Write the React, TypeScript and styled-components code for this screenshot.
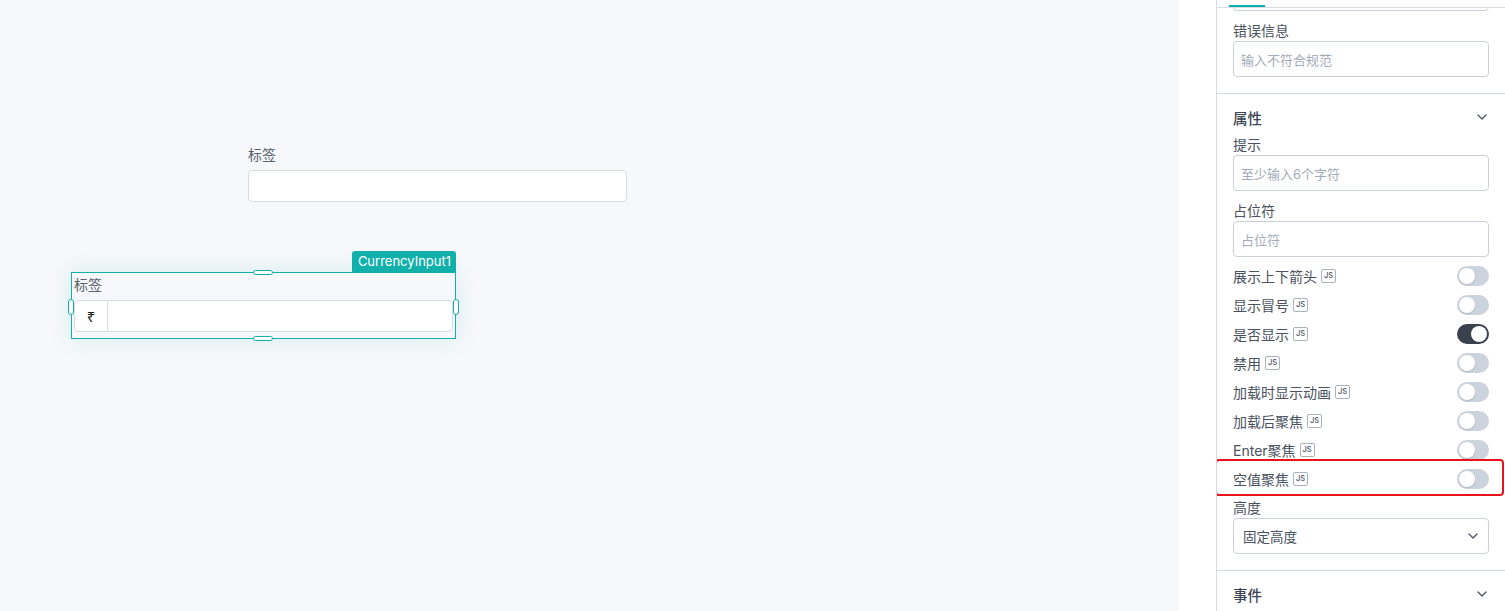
import React from "react";
import styled, { createGlobalStyle, css } from "styled-components";

const GlobalStyle = createGlobalStyle`
  html, body {
    margin: 0;
    padding: 0;
    height: 100%;
  }
  body {
    font-family: Inter, "Noto Sans CJK SC", sans-serif;
    background: #fff;
    overflow: hidden;
  }
  #root {
    height: 100%;
  }
`;

const toggles = [
    { label: "展示上下箭头", on: false },
    { label: "显示冒号", on: false },
    { label: "是否显示", on: true },
    { label: "禁用", on: false },
    { label: "加载时显示动画", on: false },
    { label: "加载后聚焦", on: false },
    { label: "Enter聚焦", on: false },
    { label: "空值聚焦", on: false, highlight: true },
];

const Chevron = ({ size = 10 }: { size?: number }) => (
    <svg width={size} height={size * 0.6} viewBox="0 0 10 6" fill="none">
        <polyline points="1,1 5,5 9,1" stroke="#4b5263" strokeWidth="1.3" strokeLinecap="round" strokeLinejoin="round" />
    </svg>
);

export default function App() {
    return (
        <>
            <GlobalStyle />
            <Layout>
                <Canvas>
                    <Widget $x={248} $y={146} $w={379}>
                        <WidgetLabel>标签</WidgetLabel>
                        <TextBox />
                    </Widget>

                    <Selected $x={71} $y={272} $w={385}>
                        <NameTag>CurrencyInput1</NameTag>
                        <Handle $side="top" />
                        <Handle $side="bottom" />
                        <Handle $side="left" />
                        <Handle $side="right" />
                        <WidgetLabel>标签</WidgetLabel>
                        <CurrencyBox>
                            <Prefix>₹</Prefix>
                        </CurrencyBox>
                    </Selected>
                </Canvas>

                <Gutter>
                    <Panel>
                        <TabBar>
                            <TabLine />
                        </TabBar>
                        <Scroller>
                            <Section>
                                <Field $scrolledOut />
                                <FieldLabel>错误信息</FieldLabel>
                                <Field>输入不符合规范</Field>
                            </Section>

                            <Section>
                                <SectionHeader>
                                    <span>属性</span>
                                    <Chevron />
                                </SectionHeader>
                                <FieldLabel>提示</FieldLabel>
                                <Field>至少输入6个字符</Field>
                                <FieldLabel $gap={11}>占位符</FieldLabel>
                                <Field>占位符</Field>
                                <ToggleList>
                                    {toggles.map((t) => (
                                        <ToggleRow key={t.label} $highlight={!!t.highlight}>
                                            <RowLabel>
                                                {t.label}
                                                <JsBadge>JS</JsBadge>
                                            </RowLabel>
                                            <Switch $on={t.on} />
                                        </ToggleRow>
                                    ))}
                                </ToggleList>
                                <FieldLabel $gap={6}>高度</FieldLabel>
                                <Select>
                                    <span>固定高度</span>
                                    <Chevron size={10} />
                                </Select>
                            </Section>

                            <Section>
                                <SectionHeader>
                                    <span>事件</span>
                                    <Chevron />
                                </SectionHeader>
                            </Section>
                        </Scroller>
                    </Panel>
                </Gutter>
            </Layout>
        </>
    );
}

const teal = "#12b0ab";

const Layout = styled.div`
    display: flex;
    height: 611px;
    width: 1505px;
`;

const Canvas = styled.div`
    position: relative;
    flex: 1;
    background: #f7f8fb;
`;

const Widget = styled.div<{ $x: number; $y: number; $w: number }>`
    position: absolute;
    left: ${(p) => p.$x}px;
    top: ${(p) => p.$y}px;
    width: ${(p) => p.$w}px;
    display: flex;
    flex-direction: column;
    gap: 6px;
`;

const WidgetLabel = styled.div`
    font-size: 14px;
    line-height: 18px;
    color: #5a616d;
`;

const TextBox = styled.div`
    height: 30px;
    background: #fff;
    border: 1px solid #dadbdf;
    border-radius: 4px;
`;

const Selected = styled.div<{ $x: number; $y: number; $w: number }>`
    position: absolute;
    left: ${(p) => p.$x}px;
    top: ${(p) => p.$y}px;
    width: ${(p) => p.$w}px;
    box-sizing: border-box;
    border: 1px solid ${teal};
    padding: 3px 2px 6px 2px;
    display: flex;
    flex-direction: column;
    gap: 6px;
    box-shadow: 0 0 22px rgba(18, 176, 171, 0.16);
`;

const NameTag = styled.div`
    position: absolute;
    right: -1px;
    top: -22px;
    height: 21px;
    padding: 0 5px 0 6px;
    background: ${teal};
    color: #fff;
    font-size: 13px;
    line-height: 21px;
    border-radius: 3px 3px 0 0;
`;

const Handle = styled.div<{ $side: "top" | "bottom" | "left" | "right" }>`
    position: absolute;
    box-sizing: border-box;
    background: #fff;
    border: 1px solid ${teal};
    border-radius: 4px;
    ${(p) =>
        p.$side === "top" || p.$side === "bottom"
            ? css`
                  width: 20px;
                  height: 5px;
                  left: 181px;
                  ${p.$side}: -3px;
              `
            : css`
                  width: 6px;
                  height: 16px;
                  top: 26px;
                  ${p.$side}: -4px;
              `}
`;

const CurrencyBox = styled.div`
    height: 32px;
    box-sizing: border-box;
    background: #fff;
    border: 1px solid #dadbdf;
    border-radius: 4px;
    display: flex;
`;

const Prefix = styled.div`
    width: 32px;
    border-right: 1px solid #dadbdf;
    display: flex;
    align-items: center;
    justify-content: center;
    font-family: "Noto Sans", "DejaVu Sans", sans-serif;
    font-size: 15px;
    color: #222;
`;

const Gutter = styled.div`
    width: 326px;
    padding-left: 37px;
    box-sizing: border-box;
    background: #fff;
    display: flex;
`;

const Panel = styled.div`
    flex: 1;
    border-left: 1px solid #d7dce4;
    display: flex;
    flex-direction: column;
    overflow: hidden;
`;

const TabBar = styled.div`
    position: relative;
    height: 7px;
    flex-shrink: 0;
    border-bottom: 1px solid #d7dce4;
    background: #fff;
    z-index: 1;
`;

const TabLine = styled.div`
    position: absolute;
    left: 12px;
    bottom: 0;
    width: 36px;
    height: 2px;
    background: ${teal};
`;

const Scroller = styled.div`
    flex: 1;
    display: flex;
    flex-direction: column;
`;

const Section = styled.div`
    padding: 12px 16px 16px 16px;
    border-bottom: 1px solid #d7dce4;
    display: flex;
    flex-direction: column;
    &:first-child {
        padding-top: 0;
    }
`;

const SectionHeader = styled.div`
    display: flex;
    align-items: center;
    justify-content: space-between;
    height: 22px;
    padding-right: 2px;
    margin-bottom: 8px;
    font-size: 14.5px;
    font-weight: 500;
    color: #3d4453;
`;

const FieldLabel = styled.div<{ $gap?: number }>`
    font-size: 14px;
    line-height: 18px;
    color: #4a5160;
    margin-top: ${(p) => p.$gap ?? 0}px;
    margin-bottom: 1px;
`;

const Field = styled.div<{ $scrolledOut?: boolean }>`
    height: 36px;
    box-sizing: border-box;
    border: 1px solid #c9d0db;
    border-radius: 4px;
    padding: 0 7px;
    display: flex;
    align-items: center;
    font-size: 13px;
    color: #a3abb8;
    ${(p) =>
        p.$scrolledOut &&
        css`
            margin-top: -33px;
            margin-bottom: 11px;
        `}
`;

const ToggleList = styled.div`
    margin-top: 4px;
    display: flex;
    flex-direction: column;
`;

const ToggleRow = styled.div<{ $highlight: boolean }>`
    position: relative;
    height: 29px;
    display: flex;
    align-items: center;
    justify-content: space-between;
    ${(p) =>
        p.$highlight &&
        css`
            &::after {
                content: "";
                position: absolute;
                left: -18px;
                right: -15px;
                top: -5px;
                bottom: -3px;
                border: 2px solid #e8121c;
                border-radius: 4px;
                pointer-events: none;
            }
        `}
`;

const RowLabel = styled.div`
    display: flex;
    align-items: center;
    gap: 4px;
    font-size: 14px;
    color: #4a5160;
`;

const JsBadge = styled.span`
    display: inline-flex;
    align-items: center;
    justify-content: center;
    width: 15px;
    height: 14px;
    box-sizing: border-box;
    border: 1px solid #a9b1bd;
    border-radius: 2px;
    font-family: Inter, sans-serif;
    font-size: 7.5px;
    font-weight: 500;
    color: #4a5160;
`;

const Switch = styled.div<{ $on: boolean }>`
    position: relative;
    width: 32px;
    height: 20px;
    border-radius: 10px;
    background: ${(p) => (p.$on ? "#3a414f" : "#cdd3dd")};
    &::after {
        content: "";
        position: absolute;
        top: 2px;
        left: ${(p) => (p.$on ? 14 : 2)}px;
        width: 16px;
        height: 16px;
        border-radius: 50%;
        background: #fff;
        box-shadow: 0 1px 2px rgba(0, 0, 0, 0.15);
    }
`;

const Select = styled.div`
    height: 36px;
    box-sizing: border-box;
    border: 1px solid #c9d0db;
    border-radius: 4px;
    padding: 0 10px 0 9px;
    display: flex;
    align-items: center;
    justify-content: space-between;
    font-size: 13.5px;
    color: #4a5160;
`;
